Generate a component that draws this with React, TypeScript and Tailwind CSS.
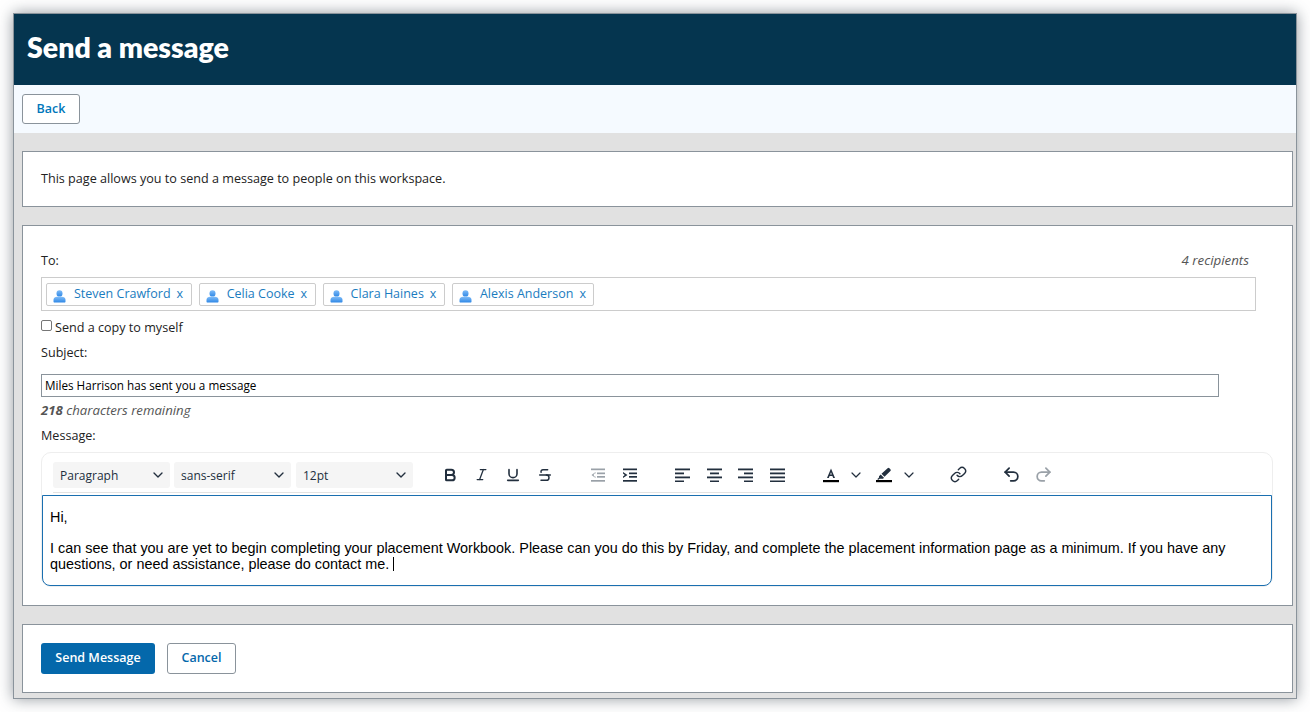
import React from 'react';
import { Bold, ChevronDown, Italic, Link, Redo2, Strikethrough, Underline, Undo2 } from 'lucide-react';

const recipients = ['Steven Crawford', 'Celia Cooke', 'Clara Haines', 'Alexis Anderson'];

function PersonIcon() {
  return (
    <svg width="13" height="13" viewBox="0 0 13 13" className="shrink-0 mt-[5px]">
      <defs>
        <linearGradient id="person" x1="0" y1="0" x2="0" y2="1">
          <stop offset="0" stopColor="#7fbcf8" />
          <stop offset="1" stopColor="#2f88e6" />
        </linearGradient>
      </defs>
      <ellipse cx="6.5" cy="3.4" rx="3" ry="3.2" fill="url(#person)" />
      <path d="M1.500 12.500c-.6 0-1-.4-1-1V9.800c0-1.700 1.800-3 3.500-3h5c1.700 0 3.500 1.300 3.500 3v1.700c0 .6-.4 1-1 1z" fill="url(#person)" />
    </svg>
  );
}

function Chip({ name }: { name: string }) {
  return (
    <div className="h-[23px] flex items-center border border-[#cccccc] rounded-[2px] pl-[6px] pr-[7.5px] text-[#1a7cc0] text-[12.5px]">
      <PersonIcon />
      <span className="ml-[8px] mr-[6px]">{name}</span>
      <span>x</span>
    </div>
  );
}

function FakeSelect({ label }: { label: string }) {
  return (
    <div className="w-[117px] h-[26px] bg-[#f5f5f5] rounded-[3px] flex items-center justify-between pl-[7px] pr-[4px] text-[12px] text-[#222f3e]">
      <span className="mt-[2px]">{label}</span>
      <ChevronDown size={16} strokeWidth={2} />
    </div>
  );
}

function Tool({ children, muted }: { children: React.ReactNode; muted?: boolean }) {
  return (
    <div className={`w-[24px] h-[24px] flex items-center justify-center ${muted ? 'text-[#9aa1a8]' : 'text-[#222f3e]'}`}>
      {children}
    </div>
  );
}

function Lines({ rows }: { rows: [number, number][] }) {
  return (
    <svg width="15" height="14" viewBox="0 0 15 14" fill="currentColor">
      {rows.map(([x, w], i) => (
        <rect key={i} x={x} y={i * 4 + 0.5} width={w} height="1.8" />
      ))}
    </svg>
  );
}

function Indent({ out }: { out?: boolean }) {
  return (
    <svg width="14" height="14" viewBox="0 0 14 14" fill="currentColor">
      <rect x="0" y="0.5" width="14" height="1.7" />
      <rect x="6" y="4.500" width="8" height="1.700" />
      <rect x="6" y="8" width="8" height="1.700" />
      <rect x="0" y="12" width="14" height="1.700" />
      {out ? <path d="M4.500 4 .5 7l4 3V8.500H3.300L2.600 7l.7-1.500h1.200z" /> : <path d="M0 4l4.500 3L0 10V8.500L1.800 7 0 5.500z" />}
    </svg>
  );
}

function App() {
  return (
    <div className="h-[712px] bg-white p-[13px] [font-family:'Open_Sans',sans-serif] text-[#222222]">
      <div className="h-[686px] border border-[#8a939b] bg-[#e1e1e1] shadow-[0_0_14px_rgba(60,70,80,0.55)] flex flex-col">
        <div className="h-[71px] bg-[#05354f] flex items-center pl-[13px] pb-[4px] text-white text-[28.5px] font-extrabold [font-family:Lato,sans-serif]">
          Send a message
        </div>
        <div className="h-[48px] bg-[#f5faff] flex items-center pl-[8px]">
          <button className="w-[58px] h-[30px] bg-white border border-[#8a939b] rounded-[3px] text-[#0077bb] text-[12.5px] font-semibold">
            Back
          </button>
        </div>

        <div className="flex-1 flex flex-col gap-[18px] pt-[18px] pl-[8px] pr-[3px]">
          <div className="h-[56px] bg-white border border-[#8a939b] flex items-center pl-[18px] text-[12.6px]">
            This page allows you to send a message to people on this workspace.
          </div>

          <div className="h-[381px] bg-white border border-[#8a939b] pl-[18px] pr-[19px] pt-[26px] text-[12.6px]">
            <div className="h-[17px] flex justify-between items-center pr-[24px]">
              <span className="mt-[1px]">To:</span>
              <span className="italic text-[#555555] text-[13.3px]">4 recipients</span>
            </div>
            <div className="mt-[8px] w-[1215px] h-[34px] border border-[#cccccc] flex items-center gap-[7px] pl-[4px]">
              {recipients.map((r) => (
                <Chip key={r} name={r} />
              ))}
            </div>
            <div className="mt-[8px] h-[16px] flex items-center">
              <div className="w-[11px] h-[11px] border border-[#767676] rounded-[2px] mr-[3px] -mt-[3px]" />
              <span className="mt-[2px]">Send a copy to myself</span>
            </div>
            <div className="mt-[10px] h-[17px] flex items-center">Subject:</div>
            <div className="mt-[12px] w-[1178px] h-[23px] border border-[#8a939b] flex items-center pl-[3px] text-[11.7px] text-black">
              Miles Harrison has sent you a message
            </div>
            <div className="mt-[5px] h-[18px] flex items-center italic text-[#555555] text-[13.2px]">
              <b>218</b>&nbsp;characters remaining
            </div>
            <div className="mt-[8px] h-[17px] flex items-center">Message:</div>

            <div className="mt-[7px] w-[1232px] h-[135px] flex flex-col rounded-[10px] border border-[#eeeeee]">
              <div className="h-[40px] mb-[2px] pt-[4px] mx-[11px] border-b border-[#e3e3e3] flex items-center shrink-0">
                <div className="flex gap-[4px]">
                  <FakeSelect label="Paragraph" />
                  <FakeSelect label="sans-serif" />
                  <div className="ml-px">
                    <FakeSelect label="12pt" />
                  </div>
                </div>
                <div className="ml-[25px] flex gap-[7.5px]">
                  <Tool><Bold size={16} strokeWidth={3} /></Tool>
                  <Tool><Italic size={15} strokeWidth={2} /></Tool>
                  <Tool><Underline size={16} strokeWidth={2.4} /></Tool>
                  <Tool><Strikethrough size={16} strokeWidth={2.2} /></Tool>
                </div>
                <div className="ml-[29px] flex gap-[8px]">
                  <Tool muted><Indent out /></Tool>
                  <Tool><Indent /></Tool>
                </div>
                <div className="ml-[29px] flex gap-[7.5px]">
                  <Tool><Lines rows={[[0, 15], [0, 9], [0, 15], [0, 9]]} /></Tool>
                  <Tool><Lines rows={[[0, 15], [3, 9], [0, 15], [3, 9]]} /></Tool>
                  <Tool><Lines rows={[[0, 15], [6, 9], [0, 15], [6, 9]]} /></Tool>
                  <Tool><Lines rows={[[0, 15], [0, 15], [0, 15], [0, 15]]} /></Tool>
                </div>
                <div className="ml-[30px] flex items-center">
                  <Tool>
                    <svg width="18" height="18" viewBox="0 0 18 18">
                      <path d="M9 2.500 5 12h1.800l.8-2.100h2.800l.8 2.100H13zM8.200 8.400 9 6.200l.8 2.200z" fill="#222f3e" fillRule="evenodd" />
                      <rect x="1" y="14" width="16" height="2.200" fill="#000" />
                    </svg>
                  </Tool>
                  <div className="ml-[5px] w-[16px] text-[#222f3e]"><ChevronDown size={16} strokeWidth={1.8} /></div>
                  <div className="ml-[8px]">
                    <Tool>
                      <svg width="18" height="18" viewBox="0 0 18 18">
                        <path d="M12.600 2.200a1.300 1.300 0 0 1 1.800 0l1 1a1.300 1.300 0 0 1 0 1.800l-5.900 5.800-3-3zM5.700 8.600l3.300 3.200-1 1H4.600l-1 .9-1.400-.4 1.800-1.800V10.300z" fill="#222f3e" />
                        <rect x="1" y="14" width="16" height="2.200" fill="#000" />
                      </svg>
                    </Tool>
                  </div>
                  <div className="ml-[5px] w-[16px] text-[#222f3e]"><ChevronDown size={16} strokeWidth={1.8} /></div>
                </div>
                <div className="ml-[29px]">
                  <Tool><Link size={17} strokeWidth={2} /></Tool>
                </div>
                <div className="ml-[29px] flex gap-[8px]">
                  <Tool><Undo2 size={19} strokeWidth={2.2} /></Tool>
                  <Tool muted><Redo2 size={19} strokeWidth={2.2} /></Tool>
                </div>
              </div>
              <div className="flex-1 border border-[#1a6fb0] rounded-b-[8px] pl-[7px] pr-[20px] pt-[13px] text-[14.4px] leading-[16px] text-black [font-family:'Liberation_Sans',sans-serif]">
                <p>Hi,</p>
                <p className="mt-[15px]">
                  I can see that you are yet to begin completing your placement Workbook. Please can you do this by Friday, and complete the placement information page as a minimum. If you have any questions, or need assistance, please do contact me.{' '}
                  <span className="inline-block w-px h-[14px] bg-black align-[-2px]" />
                </p>
              </div>
            </div>
          </div>

          <div className="h-[69px] bg-white border border-[#8a939b] flex items-center pl-[18px] gap-[12px] text-[12.5px] font-semibold">
            <button className="w-[114px] h-[31px] bg-[#0468ab] rounded-[3px] text-white">Send Message</button>
            <button className="w-[69px] h-[31px] bg-white border border-[#8a939b] rounded-[3px] text-[#0468ab]">Cancel</button>
          </div>
        </div>
      </div>
    </div>
  );
}

export default App;
